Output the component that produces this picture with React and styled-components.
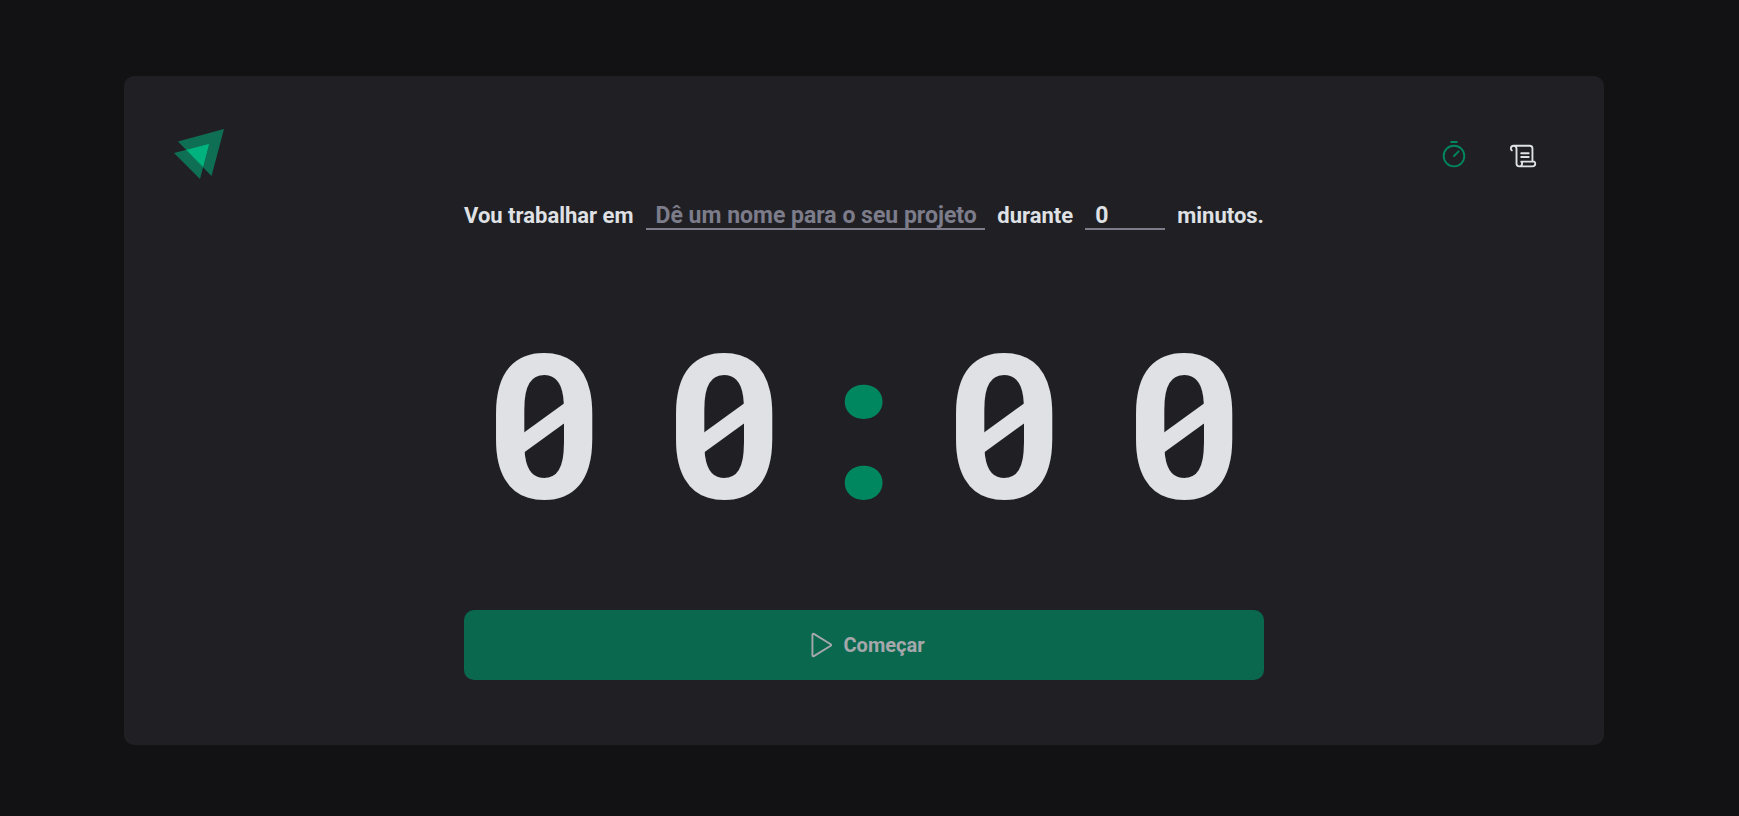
import React, { useState } from 'react'
import styled, { createGlobalStyle, ThemeProvider } from 'styled-components'
import { PiScroll, PiPlay } from 'react-icons/pi'

const theme = {
  background: '#121214',
  surface: '#202024',
  text: '#dfe1e5',
  muted: '#7c7c8a',
  green: '#00875f',
  greenLight: '#00b37e',
}

const GlobalStyle = createGlobalStyle`
  * {
    box-sizing: border-box;
    margin: 0;
    padding: 0;
  }

  body {
    background: ${theme.background};
    color: ${theme.text};
    font-family: Roboto, sans-serif;
    font-size: 20px;
  }

  button,
  input {
    font: inherit;
    color: inherit;
  }
`

const Page = styled.div`
  display: flex;
  min-height: 100vh;
  padding: 76px 135px 71px 124px;
`

const Card = styled.div`
  flex: 1;
  display: flex;
  flex-direction: column;
  padding: 50px 50px 51px;
  border-radius: 10px;
  background: ${({ theme }) => theme.surface};
`

const Header = styled.header`
  display: flex;
  align-items: center;
  justify-content: space-between;
`

const Logo = styled.svg`
  width: 50px;
  height: 56px;
`

const Nav = styled.nav`
  display: flex;
  gap: 10px;
`

const NavLink = styled.a`
  display: flex;
  align-items: center;
  justify-content: center;
  width: 60px;
  height: 60px;
  color: ${({ theme, $active }) => ($active ? theme.green : theme.text)};
`

const LineIcon = styled.svg`
  width: 30px;
  height: 30px;
  fill: none;
  stroke: currentColor;
  stroke-width: 16;
  stroke-linecap: round;
  stroke-linejoin: round;
`

const Main = styled.main`
  flex: 1;
  display: flex;
  align-items: center;
  justify-content: center;
`

const Form = styled.form`
  display: flex;
  flex-direction: column;
  gap: 70px;
  width: 100%;
  max-width: 800px;
`

const TaskRow = styled.div`
  display: flex;
  align-items: baseline;
  gap: 12px;
  height: 30px;
  font-size: 22px;
  font-weight: 700;
  line-height: 24px;
`

const LineInput = styled.input`
  flex: ${({ $width }) => ($width ? `0 0 ${$width}` : '1 1 0')};
  min-width: 0;
  height: 30px;
  padding: 2px 0 0 10px;
  border: 0;
  border-bottom: 2px solid ${({ theme }) => theme.muted};
  background: transparent;
  font-size: 23px;
  outline: none;

  &::placeholder {
    color: ${({ theme }) => theme.muted};
    opacity: 1;
  }
`

const Countdown = styled.div`
  display: flex;
  justify-content: space-between;
  gap: 20px;
  font-size: 200px;
  font-weight: 700;
  line-height: 160px;
`

const Digit = styled.span`
  position: relative;
  flex: 1;
  padding: 50px 0 30px;
  text-align: center;

  &::after {
    content: '';
    display: ${({ $slashed }) => ($slashed ? 'block' : 'none')};
    position: absolute;
    top: 50%;
    left: 50%;
    width: 40px;
    height: 20px;
    background: currentColor;
    transform: translate(-50%, -50%) translateY(8px) skewY(-36deg);
  }
`

const Separator = styled.span`
  width: 80px;
  padding: 48px 0 32px;
  display: flex;
  justify-content: center;
  font-size: 208px;
  font-weight: 900;
  color: ${({ theme }) => theme.green};
`

const StartButton = styled.button`
  display: flex;
  align-items: center;
  justify-content: center;
  gap: 10px;
  height: 70px;
  border: 0;
  border-radius: 10px;
  background: ${({ theme }) => theme.green};
  font-weight: 700;
  opacity: ${({ disabled }) => (disabled ? 0.7 : 1)};
  cursor: ${({ disabled }) => (disabled ? 'not-allowed' : 'pointer')};
`

export default function App() {
  const [task, setTask] = useState('')
  const [minutes, setMinutes] = useState('0')
  const digits = ['0', '0', '0', '0']

  const renderDigit = (digit, index) => (
    <Digit key={index} $slashed={digit === '0'}>
      {digit}
    </Digit>
  )

  return (
    <ThemeProvider theme={theme}>
      <GlobalStyle />
      <Page>
        <Card>
          <Header>
            <Logo viewBox="0 0 50 56" aria-hidden="true">
              <path d="M50 1 4 13.500 37.500 48Z" fill={theme.greenLight} opacity="0.54" />
              <path d="M35 16 0 25 26 51Z" fill={theme.greenLight} opacity="0.54" />
              <path d="M35 16 12.500 22 29 38.500Z" fill={theme.greenLight} />
            </Logo>
            <Nav>
              <NavLink href="#timer" title="Timer" $active>
                <LineIcon viewBox="0 0 256 256" aria-hidden="true">
                  <circle cx="128" cy="128" r="88" />
                  <path d="M128 128 167.600 88.400M104 8h48" />
                </LineIcon>
              </NavLink>
              <NavLink href="#historico" title="Histórico">
                <PiScroll size={30} />
              </NavLink>
            </Nav>
          </Header>
          <Main>
            <Form onSubmit={(event) => event.preventDefault()}>
              <TaskRow>
                <label htmlFor="task">Vou trabalhar em</label>
                <LineInput
                  id="task"
                  placeholder="Dê um nome para o seu projeto"
                  value={task}
                  onChange={(event) => setTask(event.target.value)}
                />
                <label htmlFor="minutes">durante</label>
                <LineInput
                  id="minutes"
                  inputMode="numeric"
                  $width="80px"
                  value={minutes}
                  onChange={(event) => setMinutes(event.target.value)}
                />
                <span>minutos.</span>
              </TaskRow>
              <Countdown>
                {digits.slice(0, 2).map(renderDigit)}
                <Separator>:</Separator>
                {digits.slice(2).map(renderDigit)}
              </Countdown>
              <StartButton type="submit" disabled={!task}>
                <PiPlay size={30} />
                Começar
              </StartButton>
            </Form>
          </Main>
        </Card>
      </Page>
    </ThemeProvider>
  )
}
